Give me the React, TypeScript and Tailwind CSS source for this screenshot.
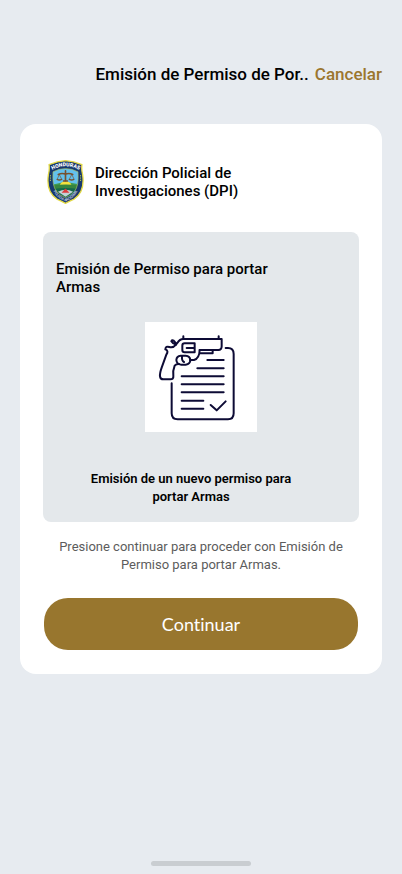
function PoliceBadge() {
  return (
    <svg viewBox="22 28 110 134" className="h-11 w-[39px] shrink-0" role="img" aria-label="Policía Nacional de Honduras">
      <defs>
        <clipPath id="field">
          <path d="M39 64 Q77 44 115 64 Q118 106 105 123 Q94 137 77 143 Q60 137 49 123 Q36 106 39 64 Z" />
        </clipPath>
        <path id="arc-top" d="M33 60 Q77 34 123 60" />
        <path id="arc-bottom" d="M34 104 Q42 142 77 154 Q112 142 120 104" />
      </defs>
      <path
        d="M77 30 Q102 31 127 42 Q125 57 129 72 Q137 125 103 147 Q90 153 77 160 Q64 153 51 147 Q17 125 25 72 Q29 57 27 42 Q52 31 77 30 Z"
        fill="#17386f"
        stroke="#e3d945"
        strokeWidth="4"
      />
      <g clipPath="url(#field)">
        <rect x="34" y="45" width="90" height="60" fill="#63c1ee" />
        <path d="M34 104 L60 98 L77 95 L96 98 L124 103 V112 H34 Z" fill="#3f9a50" />
        <path d="M60 104 Q64 93 77 93 Q91 93 95 104 Z" fill="#f5e13d" />
        <path d="M34 106 Q77 99 124 106 V122 H34 Z" fill="#37853f" />
        <path d="M36 117 Q77 109 120 117 V146 H36 Z" fill="#15684b" />
        <path d="M54 125 Q77 112 100 125 L77 140 Z" fill="#c3d3d8" />
        <path d="M77 115 L89 128 H65 Z" fill="#dd3d3f" />
      </g>
      <path
        d="M39 64 Q77 44 115 64 Q118 106 105 123 Q94 137 77 143 Q60 137 49 123 Q36 106 39 64 Z"
        fill="none"
        stroke="#a9bf62"
        strokeWidth="2"
      />
      <g fill="none" stroke="#77512f" strokeWidth="5" strokeLinecap="round">
        <path d="M77 61 V91 M55 72 Q66 67 77 71 Q88 67 99 72" />
        <path d="M58 72 L53 84 M58 72 L64 84 M96 72 L90 84 M96 72 L102 84" strokeWidth="2" />
        <path d="M52 87 Q58 91 65 87 M89 87 Q96 91 102 87 M71 92 H83" />
      </g>
      <path d="M31 74 V94 M123 74 V94" stroke="#b7c64d" strokeWidth="3" strokeDasharray="4 3" />
      <text fill="#fff" fontFamily="Roboto, sans-serif" fontSize="16" fontWeight="900">
        <textPath href="#arc-top" startOffset="50%" textAnchor="middle">HONDURAS</textPath>
      </text>
      <text fill="#c3cfdf" fontFamily="Roboto, sans-serif" fontSize="11" fontWeight="700">
        <textPath href="#arc-bottom" startOffset="50%" textAnchor="middle">POLICIA NACIONAL</textPath>
      </text>
    </svg>
  );
}

function PermitIcon() {
  return (
    <svg
      viewBox="15 12 336 330"
      className="h-[110px] w-28 bg-white"
      fill="none"
      stroke="#0d0b35"
      strokeWidth="6"
      strokeLinecap="round"
      strokeLinejoin="round"
      aria-hidden="true"
    >
      {/* sheet */}
      <path d="M95 196 V286 Q95 304 113 304 H264 Q281 304 281 286 V108 Q281 90 264 90 H257" />
      <path d="M202 126 H251 M172 151 H251 M125 175 H251 M125 199 H251 M125 223 H251 M125 248 H190 M125 272 H190" />
      <path d="M212 261 L230 277 L257 250" />
      {/* revolver */}
      <path d="M130 55 V63 H236 V55 M236 63 H245 V85 Q245 96 235 96 H179 Q178 122 162 126 H150" />
      <path d="M130 63 Q119 63 112 75 L108 80 Q98 77 94 70 Q96 65 101 68 L109 77" />
      <path d="M108 80 Q99 91 88 87 Q77 83 76 94 Q87 98 79 110 L65 149 Q59 166 60 175 Q61 184 70 184 H91 Q101 184 100 174 Q98 158 104 143 Q108 138 117 138" />
      <path d="M164 76 H134 Q127 76 127 83 V96 Q127 103 134 103 H164 Z M140 90 H164" />
      <path d="M179 96 H218 V106 H180" />
      <path d="M122 113 H137 Q150 114 151 126 Q151 138 137 140 H124 Q110 139 109 126 Q110 114 122 113 Z M126 116 Q125 129 132 132" />
    </svg>
  );
}

export default function App() {
  return (
    <div className="flex min-h-screen flex-col bg-[#e7ebf0] font-['Roboto',sans-serif] text-black">
      <header className="flex items-center justify-end gap-1.5 px-5 pt-16">
        <h1 className="text-[17px] leading-5 font-medium whitespace-nowrap">Emisión de Permiso de Por..</h1>
        <button type="button" className="text-[17px] leading-5 font-medium text-[#9b762e]">
          Cancelar
        </button>
      </header>

      <main className="mx-5 mt-10 rounded-2xl bg-white px-[23px] pt-9 pb-6">
        <div className="flex items-center gap-2.5 pl-[3px]">
          <PoliceBadge />
          <h2 className="max-w-48 text-[15px] leading-[18px] font-medium">
            Dirección Policial de Investigaciones (DPI)
          </h2>
        </div>

        <section className="mt-7 rounded-lg bg-[#e4e8eb] px-[13px] pt-7 pb-4">
          <h3 className="max-w-60 text-[15px] leading-[18px] font-medium">Emisión de Permiso para portar Armas</h3>
          <div className="mt-[26px] flex justify-center">
            <PermitIcon />
          </div>
          <p className="mt-[38px] pr-5 text-center text-[13px] leading-[18px] font-semibold">
            Emisión de un nuevo permiso para
            <br />
            portar Armas
          </p>
        </section>

        <p className="mt-4 px-2 text-center text-[13px] leading-[18px] text-[#5c5c5c]">
          Presione continuar para proceder con Emisión de
          <br />
          Permiso para portar Armas.
        </p>

        <div className="mt-6 px-px">
          <button
            type="button"
            className="block h-[52px] w-full rounded-3xl bg-[#98762e] font-['Lato',sans-serif] text-lg text-white [font-variant-ligatures:none]"
          >
            Continuar
          </button>
        </div>
      </main>

      <div className="mx-auto mt-auto mb-2 h-[5px] w-[100px] rounded-full bg-[#c9cdd1]" />
    </div>
  );
}
